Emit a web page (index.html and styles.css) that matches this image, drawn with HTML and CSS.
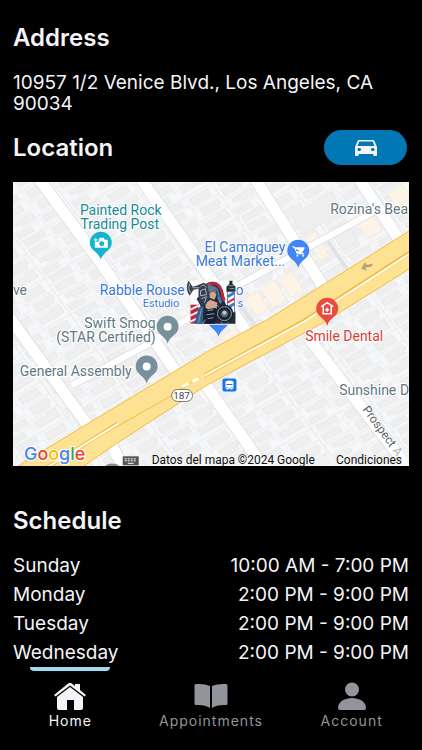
FILE: index.html
```html
<!DOCTYPE html>
<html lang="en">
<head>
<meta charset="utf-8">
<meta name="viewport" content="width=device-width, initial-scale=1">
<title>Barber shop</title>
<link rel="stylesheet" href="styles.css">
</head>
<body>
<div class="app">
  <main class="content">
    <section class="address">
      <h2>Address</h2>
      <p>10957 1/2 Venice Blvd., Los Angeles, CA 90034</p>
    </section>
    <section class="location">
      <div class="location-head">
        <h2>Location</h2>
        <button class="drive" type="button" aria-label="Directions">
          <svg width="22" height="24" viewBox="3 1 18 24" preserveAspectRatio="none" aria-hidden="true"><path fill="currentColor" d="M18.92 6.01C18.72 5.42 18.16 5 17.500 5h-11c-.66 0-1.210.42-1.420 1.010L3 12v8c0 .55.45 1 1 1h1c.55 0 1-.45 1-1v-1h12v1c0 .55.45 1 1 1h1c.55 0 1-.45 1-1v-8l-2.080-5.990zM6.500 16c-.83 0-1.500-.67-1.500-1.500S5.670 13 6.500 13s1.500.67 1.500 1.500S7.330 16 6.500 16zm11 0c-.83 0-1.500-.67-1.500-1.500s.67-1.500 1.500-1.500 1.500.67 1.500 1.500-.67 1.500-1.500 1.500zM5 11l1.500-4.500h11L19 11H5z"/></svg>
        </button>
      </div>
      <svg class="map" viewBox="13 181 397 285" role="group" aria-label="Map">
        <defs>
          <pattern id="lots" width="64" height="44" patternUnits="userSpaceOnUse" patternTransform="matrix(.87 -.5 .59 .81 20 190)">
            <path class="parcel" d="M0 0V44M32 0V44M0 1H64M0 15H32M0 30H32M32 9H64M32 22H64M32 35H64"/>
            <path class="building" d="M4 4h21v8H4zM7 18h21v5h-3v4H7zM3 33h15v-2h10v9H3zM36 12h20v7H36zM39 25h22v7H45v-3h-6zM35 37h17v5H35zM37 2h22v5H37z"/>
          </pattern>
        </defs>
        <path class="ground" d="M13 181h397v285H13z"/>
        <path fill="url(#lots)" d="M13 181h397v285H13z"/>
        <g class="shops">
          <path d="M246 298l12-7 11 17-12 7zM261 288l14-8 12 19-14 8zM280 277l12-7 12 20-13 7zM306 237l10-6 14 24-9 5zM355 214l14-8 14 23-15 9zM389 193l14-9 7 10v14l-9 4zM221 337l15-10 7 8-13 8z"/>
        </g>
        <path class="building" d="M293 214l38-23 14 18-42 25zM331 230l17-9 11 19-16 9z"/>
        <g class="street-edge">
          <path d="M37 175L101 262L179 375M139 175L199 260L253 340M254 175L324 286M358 175L401 240M9 316L90 428M206 384L268 472M309 337L414 474M112 446L127 472"/>
          <path class="lane" d="M72 385L153 341L238 285L382 207"/>
          <path class="alley" d="M326 237L348 268M231 292L256 325"/>
        </g>
        <g class="street">
          <path d="M37 175L101 262L179 375M139 175L199 260L253 340M254 175L324 286M358 175L401 240M9 316L90 428M206 384L268 472M309 337L414 474M112 446L127 472"/>
          <path class="lane" d="M72 385L153 341L238 285L382 207"/>
        </g>
        <path class="highway" d="M13 471L22 463L213 348L268 319L412 229V267L326 321L205 386L117 443L78 470z"/>
        <path class="highway-line" d="M44 469L80 447L118 423M205 375L305 320L412 251"/>
        <path class="divider" d="M80 447L167 398L200 377"/>
        <path class="median" d="M44 469L80 447L119 423M205 375L305 321L412 252"/>
        <path class="median dash" d="M183 386L203 376"/>
        <path class="direction" d="M362 268l4-7 1 3 7-1-2 3-6 1 2 3z"/>

        <g class="poi teal"><text x="121" y="214" text-anchor="middle">Painted Rock</text><text x="120" y="228" text-anchor="middle">Trading Post</text></g>
        <g class="poi blue"><text x="286" y="251" text-anchor="end">El Camaguey</text><text x="286" y="265" text-anchor="end">Meat Market...</text></g>
        <g class="poi blue"><text x="100" y="294">Rabble Rouse</text><text x="236" y="294">o</text><text class="small" x="143" y="306">Estudio</text><text class="small" x="238" y="306">s</text></g>
        <g class="poi grey">
          <text x="331" y="213">Rozina's Bea</text>
          <text x="156" y="327" text-anchor="end">Swift Smog</text>
          <text x="156" y="341" text-anchor="end">(STAR Certified)</text>
          <text x="132" y="375" text-anchor="end">General Assembly</text>
          <text x="27" y="294" text-anchor="end">ve</text>
          <text x="340" y="395">Sunshine</text>
          <text x="401" y="395">D</text>
        </g>
        <text class="poi red" x="345" y="340" text-anchor="middle">Smile Dental</text>
        <text class="road-name" transform="translate(363 409) rotate(54)">Prospect <tspan opacity=".5">A</tspan></text>

        <g class="pins">
          <path fill="#12b5cb" d="M101 259c-2-8-11-9-11-17a11 11 0 0 1 22 0c0 8-9 9-11 17z"/>
          <path fill="#4285f4" d="M299 267c-2-8-11-9-11-17a11 11 0 0 1 22 0c0 8-9 9-11 17z"/>
          <path fill="#e84b40" d="M328 325c-2-8-11-9-11-17a11 11 0 0 1 22 0c0 8-9 9-11 17z"/>
          <path fill="#78909c" d="M168 343c-2-8-11-9-11-17a11 11 0 0 1 22 0c0 8-9 9-11 17zM147 383c-2-8-11-9-11-17a11 11 0 0 1 22 0c0 8-9 9-11 17zM104 468a9 7 0 0 1 17 0z"/>
          <path fill="#4285f4" d="M219 336c-2-8-11-9-11-17a11 11 0 0 1 22 0c0 8-9 9-11 17z"/>
          <circle cx="168" cy="326" r="4" fill="#fff"/><circle cx="147" cy="366" r="4" fill="#fff"/>
          <path fill="#fff" d="M99 239l1-2h4l1 2h3v8H95v-6h4z"/><circle cx="102" cy="243" r="2.500" fill="#12b5cb"/><path d="M94 239h4M96 237v4" stroke="#fff"/>
          <path d="M293 246h2l3 7h7M295 247h10l-2 4h-6" fill="#fff" stroke="#fff" stroke-width="1"/><circle cx="298" cy="255" r="1" fill="#fff"/><circle cx="304" cy="255" r="1" fill="#fff"/>
          <path d="M322 306l6-4 6 4M324 305v8h8v-8M324 313h8M326 309h4M328 307v4" fill="none" stroke="#fff" stroke-width="1.500"/>
        </g>
        <rect x="223" y="378" width="14" height="13" rx="2" fill="#1a73e8"/>
        <path fill="#fff" d="M226 381q4-2 8 0v7h-1v1h-2v-1h-2v1h-2v-1h-1z"/><path stroke="#1a73e8" d="M227 384h6M227 387h1M232 387h1"/>
        <rect class="shield" x="172" y="389" width="21" height="12" rx="6"/><text class="shield-no" x="182" y="399" text-anchor="middle">187</text>

        <g class="shop-logo">
          <path fill="#fafafc" d="M191 280h46v44h-46z"/>
          <path fill="#b9283f" d="M191 304h8v19h-8z"/><path d="M191 309l8-4M191 315l8-4M191 321l8-4" stroke="#f2f3f6" stroke-width="2"/>
          <path fill="#222b3e" d="M207 283q7-5 13 2 5 5 5 15l3 8v15h-29l2-18-4-7 6-5z"/>
          <path d="M207 284q11-5 15 6 1 7 3 10" fill="none" stroke="#b9283f" stroke-width="3"/>
          <path d="M209 286q9-2 10 8l3 8" fill="none" stroke="#377dac" stroke-width="2"/>
          <path fill="#687386" d="M204 286l5-3 7 4 1 7-7-3-5 6z"/>
          <path fill="#d5a68d" d="M210 292l4-1 3 3-2 5-5-2zM206 302l5-3 7 3-1 6-5 3-6-4z"/>
          <path fill="#343e50" d="M189 280q-4 7 1 15l4-6 5-1v12l3 5 5-2 3-7-2-12-4-2-7 3-4 1z"/>
          <path d="M190 283q-2 5 1 9M193 287h7M201 286l3-2 3 3M201 290l5-2 1 6-6 1zM202 298l5-2-2 6" fill="none" stroke="#a8b1bf"/>
          <path fill="#2e6595" d="M199 307l5-2-1 18h-8z"/><path fill="#161e2e" d="M207 309l9-2 3 7-4 9h-10z"/>
          <path d="M208 310l6-1M207 314l8-1M208 318l6-1M218 296l3 7M216 303l4 4M202 308l-3 14M206 319l-3 4M219 318l4 5" fill="none" stroke="#8b99ad"/>
          <path fill="#202c3a" d="M230 280h3v3l3 3v5h-9v-5l3-3zM228 311h8v12h-8z"/><path d="M229 285h5M230 288h5" stroke="#91a0ad"/>
          <path fill="#fff" stroke="#27334a" stroke-width=".6" d="M228 291h7v21h-7z"/><path d="M228 296l7-4M228 307l7-4" stroke="#377fc1" stroke-width="3"/><path d="M228 302l7-4" stroke="#c62f43" stroke-width="2"/>
          <circle cx="225" cy="313" r="9" fill="#182230"/><circle cx="225" cy="313" r="7" fill="none" stroke="#929ca8"/><circle cx="225" cy="313" r="4" fill="#5d6979" stroke="#202836"/><circle cx="225" cy="312" r="2" fill="#bec8d0"/>
        </g>

        <text class="google" x="24" y="460"><tspan fill="#4285f4">G</tspan><tspan fill="#ea4335">o</tspan><tspan fill="#fbbc05">o</tspan><tspan fill="#4285f4">g</tspan><tspan fill="#34a853">l</tspan><tspan fill="#ea4335">e</tspan></text>
        <rect x="123" y="456" width="16" height="9" fill="#555"/><path d="M125 458.500h12M125 460.500h12" stroke="#fff" stroke-dasharray="2 1"/><path d="M128 463h6" stroke="#fff"/>
        <path fill="#f5f5f5" opacity=".5" d="M146 456h264v10H146z"/>
        <text class="legal" x="152" y="464">Datos del mapa ©2024 Google</text>
        <a href="#terms"><text class="legal" x="403" y="464" text-anchor="end">Condiciones</text></a>
      </svg>
    </section>
    <section class="schedule">
      <h2>Schedule</h2>
      <table>
        <tr><th scope="row">Sunday</th><td>10:00 AM - 7:00 PM</td></tr>
        <tr><th scope="row">Monday</th><td>2:00 PM - 9:00 PM</td></tr>
        <tr><th scope="row">Tuesday</th><td>2:00 PM - 9:00 PM</td></tr>
        <tr><th scope="row">Wednesday</th><td>2:00 PM - 9:00 PM</td></tr>
      </table>
    </section>
  </main>
  <nav class="tabs">
    <a class="tab active" href="#home">
      <svg width="34" height="28" viewBox="0 0 34 28" aria-hidden="true"><path fill="currentColor" d="M1 13L15.500 1.300q1.500-1 3 0L22 4V2h5v6l6 5-1.500 1.500L17 3.500 2.500 14.500zM17 5l13 10v11q0 2-2 2h-7V18h-7v10H6q-2 0-2-2V15z"/></svg>
      <span>Home</span>
    </a>
    <a class="tab" href="#appointments">
      <svg width="34" height="28" viewBox="0 0 34 28" aria-hidden="true"><path fill="currentColor" d="M16 4v22Q11 22.500 2 23q-1.500 0-1.500-1.500V3.500Q.5 2 2 2q9-.5 14 2zM18 4v22q5-3.500 14-3 1.500 0 1.500-1.500V3.500Q33.500 2 32 2q-9-.5-14 2z"/></svg>
      <span>Appointments</span>
    </a>
    <a class="tab" href="#account">
      <svg width="34" height="28" viewBox="0 0 34 28" aria-hidden="true"><circle fill="currentColor" cx="17" cy="7.500" r="7"/><path fill="currentColor" d="M3 26C3 12.500 31 12.500 31 26q0 2-2 2H5q-2 0-2-2z"/></svg>
      <span>Account</span>
    </a>
  </nav>
</div>
</body>
</html>
```

FILE: styles.css
```css
* { box-sizing: border-box; }
body {
  margin: 0;
  background: #000;
  color: #f4f4f8;
  font: 19px/21px Inter, "Liberation Sans", sans-serif;
}
.app {
  display: grid;
  grid-template-rows: minmax(0, 1fr) auto;
  height: 100vh;
}
.content {
  padding: 25px 13px 0;
  overflow-y: auto;
  scrollbar-width: none;
}
h2 { margin: 0; font-size: 24px; line-height: 26px; font-weight: 600; }
.address p { margin: 21px 0 16px; }
.location-head {
  display: flex;
  align-items: center;
  justify-content: space-between;
  padding-right: 2px;
  margin-bottom: 17px;
}
.drive {
  display: grid;
  place-items: center;
  width: 83px;
  height: 35px;
  padding: 0;
  border: 0;
  border-radius: 18px;
  background: #0277b5;
  color: #f4f4f8;
}
.map { display: block; width: 100%; font-family: Roboto, sans-serif; overflow: hidden; }
.ground { fill: #f6f7f9; }
.parcel { fill: none; stroke: #eaebed; }
.building { fill: #efeff0; stroke: #e9e9eb; stroke-width: 1; }
.shops { fill: #fdf3e6; stroke: #f5ebde; }
.street, .street-edge { fill: none; stroke: #fff; stroke-width: 11; }
.street-edge { stroke: #e0e2e6; stroke-width: 13; }
.street .lane { stroke-width: 6; }
.street-edge .lane { stroke-width: 8; }
.street-edge .alley { stroke-width: 4; }
.highway { fill: #fde293; stroke: #f3bc43; stroke-width: 1; }
.highway-line { fill: none; stroke: #f3bc43; stroke-width: 4; }
.divider { fill: none; stroke: #f3bc43; stroke-width: 1; }
.median { fill: none; stroke: #fffdf2; stroke-width: 2; }
.dash { stroke-width: 3; stroke-dasharray: 7 4; }
.direction { fill: #b5a577; }
.poi { font-size: 14px; paint-order: stroke; stroke: #fff; stroke-width: 2px; stroke-linejoin: round; }
.poi text { paint-order: stroke; }
.poi .small { font-size: 11px; }
.teal { fill: #178b94; }
.blue { fill: #3b78d8; }
.grey { fill: #637882; }
.red { fill: #d63c35; }
.road-name { font-size: 12px; fill: #606468; }
.shield { fill: #fff; stroke: #777; }
.shield-no { font-size: 10px; fill: #444; }
.google { font-family: Inter, sans-serif; font-size: 18px; font-weight: 500; paint-order: stroke; stroke: #fff; stroke-width: 2px; }
.legal { font-size: 12px; fill: #111; }
.schedule { margin-top: 42px; }
table { width: 100%; margin-top: 17px; border-collapse: collapse; }
th, td { padding: 4px 0; font-weight: 400; text-align: left; }
td { text-align: right; }
.tabs {
  display: grid;
  grid-template-columns: repeat(3, 1fr);
  height: 83px;
}
.tab {
  display: flex;
  flex-direction: column;
  align-items: center;
  gap: 3px;
  padding-top: 15px;
  color: #92939b;
  font-size: 14px;
  letter-spacing: 1px;
  line-height: 16px;
  text-decoration: none;
  position: relative;
}
.active { color: #f4f4f8; }
.active::before {
  content: "";
  position: absolute;
  top: 0;
  width: 80px;
  height: 4px;
  border-radius: 0 0 4px 4px;
  background: #9edcf5;
}
```
